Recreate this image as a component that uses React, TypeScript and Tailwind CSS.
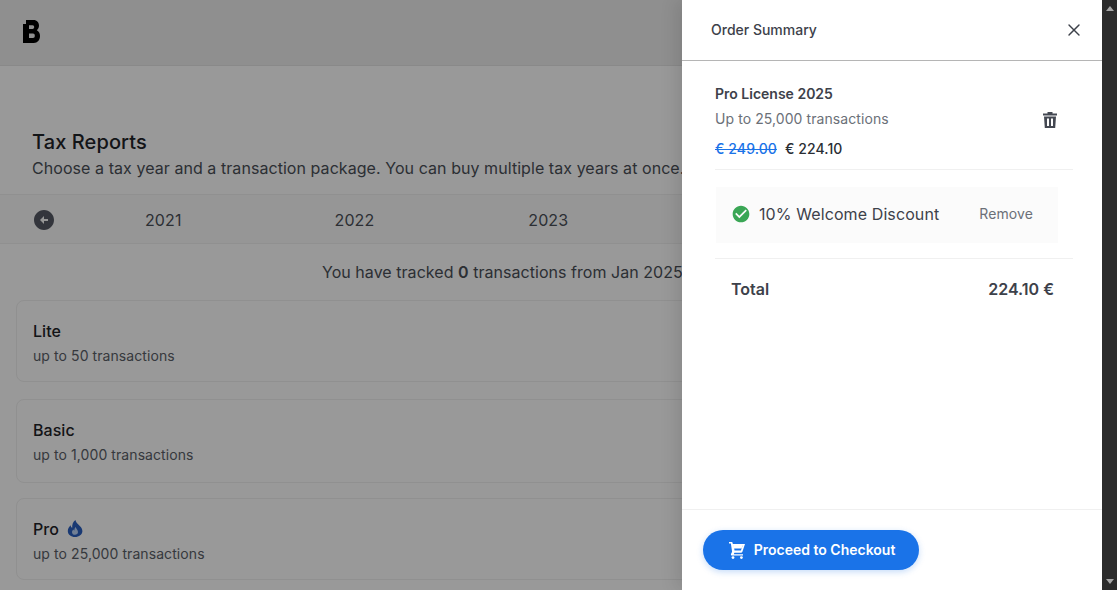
import { X } from "lucide-react";
import { MdCheckCircle, MdArrowCircleLeft } from "react-icons/md";

function Logo() {
  return (
    <svg viewBox="0 0 17 23" className="w-[17px] h-[23px] mb-[2px] text-black" fill="currentColor">
      <path
        fillRule="evenodd"
        d="M3 0H10.5C14 0 16 2.5 16 5.5C16 7.6 15.1 9.2 13.8 10.2C15.8 11.1 17 13.2 17 16C17 20 14.5 23 10.8 23H0V4H3ZM6 5.2V9H9.6C10.7 9 11.2 8.1 11.2 7.1C11.2 6.1 10.7 5.2 9.6 5.2ZM6 13.5V18H10C11.2 18 11.8 17 11.8 15.7C11.8 14.4 11.2 13.5 10 13.5Z"
      />
    </svg>
  );
}

function Flame() {
  return (
    <svg viewBox="0 0 16 17" className="w-4 h-[17px]">
      <path
        fill="#2a5fc0"
        d="M8.4 0C9 2.4 10.2 3.4 11.6 4.8C13 6.2 15.4 8 15.4 11C15.4 14.6 12 17 8 17C4 17 .8 14.6 .8 11C.8 8.4 2.2 6.6 3.6 5.2C3.8 6.6 4.4 7.4 5.2 7.8C5 4.8 6 1.6 8.4 0Z"
      />
      <path fill="#bcd4f7" d="M8.6 7C8.8 8.6 11 9.6 11 12C11 13.8 9.6 14.8 8 14.8C6.4 14.8 5 13.8 5 12.2C5 11 5.6 10.2 6.4 9.4C6.6 10 7 10.4 7.4 10.6C7.4 9.2 7.6 8 8.6 7Z" />
    </svg>
  );
}

function Trash() {
  return (
    <svg viewBox="0 0 14 16" className="w-[14px] h-4 mr-[16px] mb-[4px] text-[#444852]" fill="currentColor">
      <path d="M4.5 0H9.5V1.5H14V3.5H0V1.5H4.5Z" />
      <path
        fillRule="evenodd"
        d="M1 4.5H13L12.2 16H1.8ZM4 6.5V14H6V6.5ZM8 6.5V14H10V6.5Z"
      />
    </svg>
  );
}

function Cart() {
  return (
    <svg viewBox="0 0 16 17" className="w-4 h-[17px]" fill="white">
      <path
        fillRule="evenodd"
        d="M0 0H3.2L3.9 2H16L13.4 9.8C13.2 10.4 12.7 10.8 12 10.8H5.4L4.8 12.2H14V13.6H3C2.2 13.6 1.6 12.8 2 12L3.1 9.8L1.9 1.6H0ZM4.8 3.6L5.5 8.6H11.9L13.6 3.6Z"
      />
      <path d="M4.5 3H13.8L12.6 6.5H5Z" />
      <circle cx="4" cy="15.6" r="1.4" />
      <circle cx="12.4" cy="15.6" r="1.4" />
    </svg>
  );
}

function Card({ title, sub, fire, box }: { title: string; sub: string; fire?: boolean; box: string }) {
  return (
    <div className={`${box} w-full rounded-lg border border-[#f0f0f0] pl-4 flex flex-col justify-center`}>
      <div className="flex items-center gap-2 text-base leading-[22px] font-medium text-[#1f2328] tracking-[0.04px]">
        {title}
        {fire && <Flame />}
      </div>
      <div className="mt-[4px] text-sm leading-5 text-[#5b6068] tracking-[0.08px]">{sub}</div>
    </div>
  );
}

export default function App() {
  return (
    <div className="flex h-[590px] w-[1117px] overflow-hidden font-['Inter',sans-serif]">
      <div className="relative flex-1 h-full overflow-hidden bg-white">
        <header className="h-[66px] flex items-center pl-[23px] border-b border-[#e4e4e4] bg-[#eeeeee]">
          <Logo />
        </header>
        <div className="pt-[62px] pl-8">
          <h1 className="text-xl leading-7 font-medium text-[#1f2328] tracking-[0.1px]">Tax Reports</h1>
          <p className="text-base leading-6 text-[#4a4f57] whitespace-nowrap tracking-[0.06px]">
            Choose a tax year and a transaction package. You can buy multiple tax years at once.
          </p>
        </div>
        <div className="mt-[14px] h-[50px] pt-[2px] flex items-center border-y border-[#f0f0f0] bg-[#fbfbfb] text-base text-[#4a4f57] pl-8 tracking-[0.1px]">
          <MdArrowCircleLeft className="w-6 h-6 text-[#555964]" />
          <span className="ml-[89px]">2021</span>
          <span className="ml-[153px]">2022</span>
          <span className="ml-[154px]">2023</span>
        </div>
        <p className="mt-4 pl-[322px] text-base leading-6 text-[#4a4f57] whitespace-nowrap tracking-[0.04px]">
          You have tracked <span className="font-semibold">0</span> transactions from Jan 2025 to Dec 2025
        </p>
        <div className="mt-4 pl-4 pr-4 flex flex-col">
          <Card title="Lite" sub="up to 50 transactions" box="h-[82px] mb-[17px] pt-[3px]" />
          <Card title="Basic" sub="up to 1,000 transactions" box="h-[84px] mb-[15px] pt-px" />
          <Card title="Pro" sub="up to 25,000 transactions" fire box="h-[82px] pt-[3px]" />
        </div>

        <div className="absolute inset-0 bg-black/40" />

        <aside className="absolute top-0 right-0 bottom-0 w-[420px] bg-white flex flex-col text-[#3d414a] shadow-[-6px_0_16px_rgba(0,0,0,0.1)]">
          <div className="h-[61px] shrink-0 flex items-center justify-between pl-[29px] pr-[18px] border-b border-[#b5b5b5]">
            <span className="text-sm font-medium">Order Summary</span>
            <X className="w-5 h-5" strokeWidth={1.7} />
          </div>
          <div className="flex-1 pl-[33px] pr-[29px] pt-[23px]">
            <div className="flex items-center justify-between border-b border-[#f0f0f0] pb-[10px]">
              <div>
                <div className="text-sm leading-5 font-semibold">Pro License 2025</div>
                <div className="mt-[5px] text-sm leading-5 text-[#6b7078] tracking-[0.08px]">Up to 25,000 transactions</div>
                <div className="mt-[10px] text-sm leading-5 font-medium tracking-[0.1px]">
                  <span className="text-[#1a73e8] line-through">€ 249.00</span>
                  <span className="ml-2 text-[#2a2e34]">€ 224.10</span>
                </div>
              </div>
              <Trash />
            </div>
            <div className="mt-[17px] ml-px w-[342px] h-[56px] pb-[2px] bg-[#fbfbfb] flex items-center pl-[15px] pr-[25px]">
              <MdCheckCircle className="w-[20px] h-[20px] text-[#3aa655]" />
              <span className="ml-2 text-base font-normal tracking-[0.1px]">10% Welcome Discount</span>
              <span className="ml-auto text-sm text-[#6b7078] tracking-[0.1px]">Remove</span>
            </div>
            <div className="mt-[15px] border-t border-[#f0f0f0] pt-5 pl-4 pr-[19px] flex justify-between text-base leading-5 font-semibold">
              <span>Total</span>
              <span>224.10 €</span>
            </div>
          </div>
          <div className="h-[81px] shrink-0 border-t border-[#f0f0f0] flex items-center pl-[21px]">
            <button className="w-[216px] h-10 pl-[2px] rounded-full bg-[#1a73e8] text-white text-sm font-semibold flex items-center justify-center gap-[9px] shadow-[0_2px_6px_rgba(26,115,232,0.25)]">
              <Cart />
              Proceed to Checkout
            </button>
          </div>
        </aside>
      </div>
      <div className="w-[15px] h-full bg-[#2c2c2c] flex flex-col items-center justify-between py-[6px] shrink-0">
        <span className="w-0 h-0 border-x-[4px] border-x-transparent border-b-[5px] border-b-[#a8a8a8]" />
        <span className="w-0 h-0 border-x-[4px] border-x-transparent border-t-[5px] border-t-[#a8a8a8]" />
      </div>
    </div>
  );
}
